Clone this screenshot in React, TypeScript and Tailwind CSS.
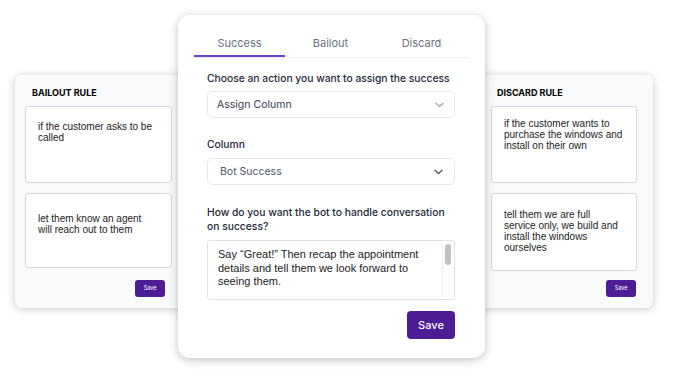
import React from "react";

const sans = { fontFamily: "Inter, 'Noto Sans', sans-serif" };
const arial = { fontFamily: "'Liberation Sans', Arial, sans-serif" };

function Chevron({ color }: { color: string }) {
  return (
    <svg width="9" height="6" viewBox="0 0 9 6" fill="none">
      <path d="M1 1.2l3.5 3.3 3.5-3.3" stroke={color} strokeWidth="1.2" strokeLinecap="round" strokeLinejoin="round" />
    </svg>
  );
}

function RuleBox({ text, h, pt, mt, pr }: { text: string; h: string; pt: string; mt: string; pr: string }) {
  return (
    <div className={"rounded-[3px] border border-[#d4d6db] bg-white pl-[12px] text-[10px] leading-[11px] text-[#222] " + h + " " + pt + " " + mt + " " + pr} style={arial}>
      {text}
    </div>
  );
}

export default function App() {
  return (
    <div className="relative h-[379px] w-[680px] overflow-hidden bg-white" style={sans}>
      <div className="flex justify-between pl-[15px] pr-[27px] pt-[75px]">
        <div className="flex h-[233px] w-[190px] flex-col rounded-[7px] bg-[#f9fafb] pl-[10px] pr-[33px] shadow-[0_1px_8px_rgba(0,0,0,0.22)]">
          <div className="mt-[13px] h-[12px] pl-[7px] text-[9px] font-bold leading-none text-black">BAILOUT RULE</div>
          <RuleBox text="if the customer asks to be called" h="h-[77px]" pt="pt-[14px]" mt="mt-[6px]" pr="pr-[14px]" />
          <RuleBox text="let them know an agent will reach out to them" h="h-[75px]" pt="pt-[19px]" mt="mt-[10px]" pr="pr-[14px]" />
          <div className="mt-[12px] flex justify-end pr-[7px]">
            <div className="flex h-[17px] w-[30px] items-center justify-center rounded-[3px] bg-[#4c1d95] text-[5.5px] text-white">Save</div>
          </div>
        </div>
        <div className="flex h-[233px] w-[200px] flex-col rounded-[7px] bg-[#f9fafb] pl-[38px] pr-[16px] shadow-[0_1px_8px_rgba(0,0,0,0.22)]">
          <div className="mt-[13px] h-[12px] pl-[6px] text-[9px] font-bold leading-none text-black">DISCARD RULE</div>
          <RuleBox text="if the customer wants to purchase the windows and install on their own" h="h-[77px]" pt="pt-[11px]" mt="mt-[6px]" pr="pr-[9px]" />
          <RuleBox text="tell them we are full service only, we build and install the windows ourselves" h="h-[78px]" pt="pt-[15px]" mt="mt-[10px]" pr="pr-[14px]" />
          <div className="mt-[9px] flex justify-end pr-[1px]">
            <div className="flex h-[17px] w-[30px] items-center justify-center rounded-[3px] bg-[#4c1d95] text-[5.5px] text-white">Save</div>
          </div>
        </div>
      </div>

      <div className="absolute left-[178px] top-[15px] flex h-[343px] w-[307px] flex-col rounded-[12px] bg-white px-[16px] pt-[16px] shadow-[0_2px_10px_rgba(0,0,0,0.25)]">
        <div className="flex border-b border-[#eef0f3] pr-[2px]">
          {["Success", "Bailout", "Discard"].map((t, i) => (
            <div key={t} className={"flex h-[26px] flex-1 items-start justify-center pt-[4px] text-[11px] text-[#6b7280] " + (i === 0 ? "border-b-2 border-[#6d3fd1]" : "")}>
              {t}
            </div>
          ))}
        </div>
        <div className="flex flex-col px-[13px] pr-[14px]">
          <div className="mt-[13px] text-[10.3px] font-medium leading-[14px] text-[#1f2937]">Choose an action you want to assign the success</div>
          <div className="mt-[6px] flex h-[27px] items-center justify-between rounded-[5px] border border-[#e5e7eb] pl-[9px] pr-[10px] text-[10.5px] text-[#374151]">
            <span>Assign Column</span>
            <Chevron color="#9ca3af" />
          </div>
          <div className="mt-[19px] text-[10.3px] font-medium leading-[14px] text-[#1f2937]">Column</div>
          <div className="mt-[7px] flex h-[27px] items-center justify-between rounded-[5px] border border-[#e5e7eb] pl-[12px] pr-[11px] text-[10.5px] text-[#4b5563]">
            <span>Bot Success</span>
            <Chevron color="#4b5563" />
          </div>
          <div className="mt-[20px] text-[10.3px] font-medium leading-[14px] text-[#1f2937]">How do you want the bot to handle conversation on success?</div>
          <div className="relative mt-[7px] h-[60px] rounded-[3px] border border-[#dfe1e5] pl-[10px] pr-[20px] pt-[7px] text-[11px] leading-[13.5px] text-[#222]" style={arial}>
            Say “Great!” Then recap the appointment details and tell them we look forward to seeing them.
            <div className="absolute bottom-[2px] right-[2px] top-[2px] w-[10px] border-l border-[#f0f0f0]">
              <div className="mx-auto mt-[1px] h-[21px] w-[6px] rounded-[3px] bg-[#c1c1c1]" />
            </div>
          </div>
          <div className="mt-[11px] flex justify-end">
            <div className="flex h-[28px] w-[48px] items-center justify-center rounded-[4px] bg-[#4c1d95] text-[11px] font-medium text-white">Save</div>
          </div>
        </div>
      </div>
    </div>
  );
}
